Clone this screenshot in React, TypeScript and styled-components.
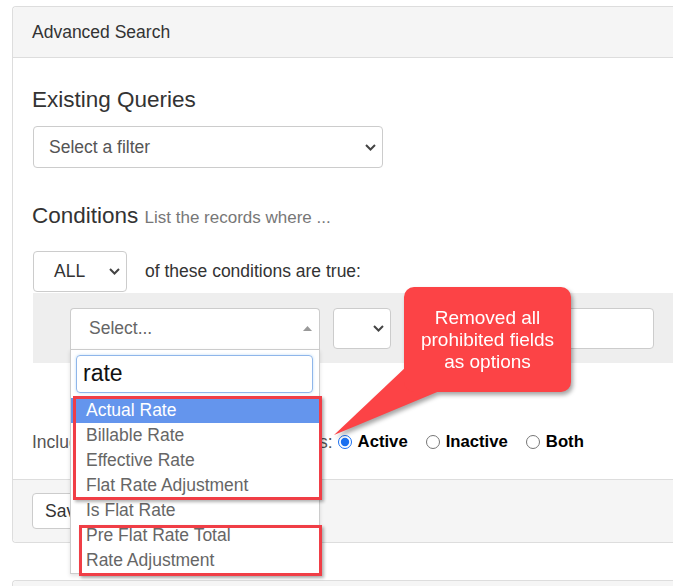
import styled, { createGlobalStyle } from 'styled-components'

const GlobalStyle = createGlobalStyle`
  html, body {
    margin: 0;
    padding: 0;
    width: 673px;
    height: 586px;
    overflow: hidden;
    background: #fff;
    font-family: "Liberation Sans", Arial, Helvetica, sans-serif;
    color: #333;
  }
  * { box-sizing: border-box; }
`

const options = [
  'Actual Rate',
  'Billable Rate',
  'Effective Rate',
  'Flat Rate Adjustment',
  'Is Flat Rate',
  'Pre Flat Rate Total',
  'Rate Adjustment',
]

const Chevron = () => (
  <svg width="11" height="7" viewBox="0 0 11 7">
    <path d="M1 1l4.5 4.5L10 1" fill="none" stroke="#444" strokeWidth="2" />
  </svg>
)

const App = () => {
  return (
    <Page>
      <GlobalStyle />
      <Panel>
        <PanelHeader>Advanced Search</PanelHeader>
        <PanelBody>
          <SectionTitle>Existing Queries</SectionTitle>
          <SelectBox $width={350} $height={42}>
            <SelectText>Select a filter</SelectText>
            <Chevron />
          </SelectBox>

          <SectionTitle $spaced>
            Conditions <Hint>List the records where ...</Hint>
          </SectionTitle>
          <MatchRow>
            <SelectBox $width={94} $height={41}>
              <SelectText $dark $indent={20}>ALL</SelectText>
              <Chevron />
            </SelectBox>
            <span>of these conditions are true:</span>
          </MatchRow>

          <ConditionRow>
            <FieldWrap>
              <FieldSelect>
                <Placeholder>Select...</Placeholder>
                <svg width="9" height="5" viewBox="0 0 9 5">
                  <path d="M0 5L4.5 0L9 5z" fill="#999" />
                </svg>
              </FieldSelect>
              <Menu>
                <SearchInput>rate</SearchInput>
                {options.map((o, i) => (
                  <MenuOption key={o} $active={i === 0}>{o}</MenuOption>
                ))}
                <Marker $left={2} $top={46} $width={249} $height={104} />
                <Marker $left={8} $top={175} $width={243} $height={51} />
              </Menu>
            </FieldWrap>
            <SelectBox $width={58} $height={41}>
              <span />
              <Chevron />
            </SelectBox>
            <TextInput />
          </ConditionRow>

          <StatusRow>
            <StatusLabel>Include all records with these statuses:</StatusLabel>
            <RadioOption>
              <Radio type="radio" name="status" defaultChecked />
              Active
            </RadioOption>
            <RadioOption>
              <Radio type="radio" name="status" />
              Inactive
            </RadioOption>
            <RadioOption>
              <Radio type="radio" name="status" />
              Both
            </RadioOption>
          </StatusRow>
        </PanelBody>
        <PanelFooter>
          <Button>Save Query</Button>
        </PanelFooter>
      </Panel>

      <NextPanel>
        <PanelHeader />
      </NextPanel>

      <Callout>
        <Tail width="120" height="82" viewBox="0 0 120 82">
          <polygon points="2,78 75,9 110,33" fill="#fc4346" />
        </Tail>
        <CalloutBox>
          Removed all
          <br />
          prohibited fields
          <br />
          as options
        </CalloutBox>
      </Callout>
    </Page>
  )
}

const Page = styled.div`
  position: relative;
  width: 673px;
  height: 586px;
  padding: 6px 0 0 12px;
  overflow: hidden;
`

const Panel = styled.div`
  width: 680px;
  border: 1px solid #ddd;
  border-right: none;
  border-radius: 4px 0 0 4px;
  background: #fff;
`

const NextPanel = styled(Panel)`
  margin-top: 37px;
  height: 60px;
  overflow: hidden;
`

const PanelHeader = styled.div`
  height: 51px;
  padding: 0 19px;
  display: flex;
  align-items: center;
  background: #f5f5f5;
  border-bottom: 1px solid #ddd;
  border-radius: 4px 0 0 0;
  font-size: 17.5px;
  color: #333;
`

const PanelBody = styled.div`
  padding: 29px 0 27px 20px;
`

const SectionTitle = styled.div<{ $spaced?: boolean }>`
  font-size: 22.5px;
  line-height: 26px;
  color: #333;
  margin: ${p => (p.$spaced ? '35px 0 20px -1px' : '0 0 13px -1px')};
`

const Hint = styled.span`
  font-size: 17px;
  color: #777;
`

const SelectBox = styled.div<{ $width: number; $height: number }>`
  width: ${p => p.$width}px;
  height: ${p => p.$height}px;
  flex: none;
  display: flex;
  align-items: center;
  justify-content: space-between;
  padding: 0 6px 0 0;
  border: 1px solid #ccc;
  border-radius: 4px;
  background: #fff;
`

const SelectText = styled.span<{ $dark?: boolean; $indent?: number }>`
  padding-left: ${p => p.$indent ?? 15}px;
  font-size: 17.5px;
  color: ${p => (p.$dark ? '#333' : '#555')};
`

const MatchRow = styled.div`
  display: flex;
  align-items: center;
  gap: 18px;
  font-size: 17.5px;
  color: #333;
`

const ConditionRow = styled.div`
  display: flex;
  align-items: center;
  gap: 13px;
  height: 70px;
  margin-top: 1px;
  padding-left: 37px;
  background: #eee;
`

const FieldWrap = styled.div`
  position: relative;
  width: 250px;
  flex: none;
  z-index: 2;
`

const FieldSelect = styled.div`
  height: 41px;
  display: flex;
  align-items: center;
  justify-content: space-between;
  padding: 0 7px 0 18px;
  border: 1px solid #ccc;
  border-bottom: none;
  border-radius: 4px 4px 0 0;
  background: #fff;
`

const Placeholder = styled.span`
  font-size: 17.5px;
  color: #666;
`

const Menu = styled.div`
  position: absolute;
  top: 100%;
  left: 0;
  width: 250px;
  border: 1px solid #ccc;
  background: #fff;
  box-shadow: 0 2px 4px rgba(0, 0, 0, 0.12);
`

const SearchInput = styled.div`
  height: 38px;
  margin: 5px 6px 5px 5px;
  padding: 0 6px;
  display: flex;
  align-items: center;
  border: 1px solid #8fb6ea;
  border-radius: 4px;
  box-shadow: 0 0 3px rgba(102, 175, 233, 0.4);
  font-size: 23px;
  color: #111;
`

const MenuOption = styled.div<{ $active?: boolean }>`
  height: 25px;
  display: flex;
  align-items: center;
  padding-left: 15px;
  font-size: 17.5px;
  color: ${p => (p.$active ? '#fff' : '#666')};
  background: ${p => (p.$active ? '#6495ed' : 'transparent')};
`

const Marker = styled.div<{ $left: number; $top: number; $width: number; $height: number }>`
  position: absolute;
  left: ${p => p.$left}px;
  top: ${p => p.$top}px;
  width: ${p => p.$width}px;
  height: ${p => p.$height}px;
  border: 3px solid #f03e46;
  box-shadow: 2px 2px 3px rgba(0, 0, 0, 0.3);
`

const TextInput = styled.div`
  width: 250px;
  height: 41px;
  flex: none;
  border: 1px solid #ccc;
  border-radius: 4px;
  background: #fff;
`

const StatusRow = styled.div`
  display: flex;
  align-items: center;
  gap: 18px;
  margin-top: 69px;
  height: 20px;
  font-size: 17.5px;
`

const StatusLabel = styled.span`
  color: #555;
  margin-left: -1px;
  margin-right: -13px;
`

const RadioOption = styled.label`
  display: flex;
  align-items: center;
  gap: 6px;
  font-weight: bold;
  font-size: 16.7px;
  color: #000;
`

const Radio = styled.input`
  width: 14px;
  height: 14px;
  margin: 0;
  accent-color: #1a6ff0;
`

const PanelFooter = styled.div`
  padding: 13px 19px;
  background: #f5f5f5;
  border-top: 1px solid #ddd;
  border-radius: 0 0 0 4px;
`

const Button = styled.button`
  height: 36px;
  padding: 0 12px;
  border: 1px solid #ccc;
  border-radius: 4px;
  background: #fff;
  font-family: inherit;
  font-size: 17.5px;
  color: #333;
`

const Callout = styled.div`
  position: absolute;
  left: 404px;
  top: 287px;
  z-index: 5;
  filter: drop-shadow(2px 3px 2px rgba(0, 0, 0, 0.35));
`

const Tail = styled.svg`
  position: absolute;
  left: -72px;
  top: 70px;
`

const CalloutBox = styled.div`
  position: relative;
  width: 167px;
  height: 105px;
  padding-top: 20px;
  border-radius: 10px;
  background: #fc4346;
  color: #fff;
  font-size: 19px;
  line-height: 22px;
  text-align: center;
`

export default App
